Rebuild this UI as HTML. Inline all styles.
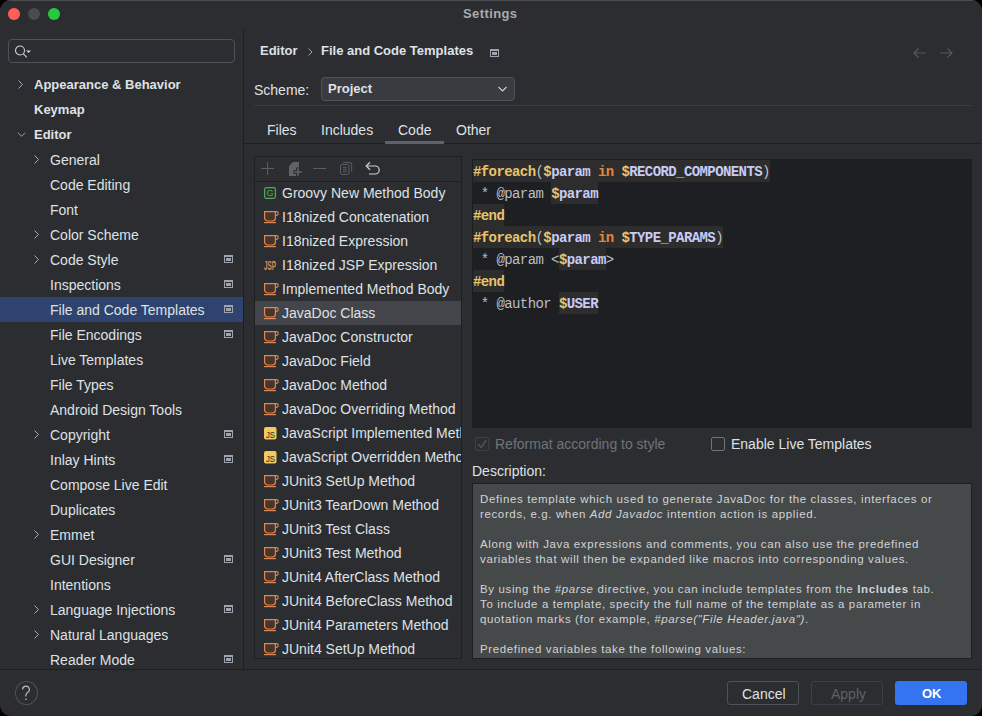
<!DOCTYPE html>
<html><head><meta charset="utf-8">
<style>
*{box-sizing:border-box;margin:0;padding:0}
html,body{width:982px;height:716px;overflow:hidden;background:#000}
body{font-family:"Liberation Sans",sans-serif;font-size:13px;color:#DFE1E5;position:relative}
.a{position:absolute}
.win{position:absolute;left:0;top:0;width:982px;height:716px;background:#2B2D30;border-radius:11px;overflow:hidden}
.t{position:absolute;white-space:pre;font-size:14px;margin-top:1px}
.t.b{font-weight:bold;font-size:13px;margin-top:0}
.row{position:absolute;left:0;width:243px;height:25px;line-height:25px;white-space:pre}
.row span{position:absolute;top:1px;font-size:14px}
.row b{position:absolute;top:0}
.chev{position:absolute;top:8px;width:9px;height:9px}
.pi{position:absolute;left:224px;top:8px;width:9px;height:8px}
.li{position:absolute;left:1px;width:206px;height:24px;line-height:24px;white-space:pre}
.li span{position:absolute;left:27px;top:0;font-size:14px}
.li svg{position:absolute;left:9px;top:6px}
.code{position:absolute;left:473px;font-family:"Liberation Mono",monospace;font-size:14px;letter-spacing:-.59px;height:22px;line-height:22px;white-space:pre;color:#BCBEC4;font-weight:bold}
.d,.v,.k,.g{position:relative;top:1px}.d{color:#E8C46A}.v{color:#C8CBF3}.k{color:#E3883A}.g{color:#BCBEC4;font-weight:normal}
.hl{background:#2D2D2E;display:inline-block;height:22px;vertical-align:top}
.desc{position:absolute;left:480px;font-size:11.5px;letter-spacing:.63px;color:#D2D3D5;white-space:pre;line-height:15px}
</style></head><body>
<div class="win">
  <div class="a" style="left:0;top:0;width:982px;height:1px;background:#4A4C50"></div>
  <!-- traffic lights -->
  <div class="a" style="left:8px;top:8px;width:12px;height:12px;border-radius:50%;background:#FF5F57"></div>
  <div class="a" style="left:28px;top:8px;width:12px;height:12px;border-radius:50%;background:#4A4B4E"></div>
  <div class="a" style="left:48px;top:8px;width:12px;height:12px;border-radius:50%;background:#28C840"></div>
  <div class="t b" style="left:463px;top:5px;line-height:17px;color:#A9AAAD;font-size:13px;letter-spacing:.4px">Settings</div>

  <!-- sidebar -->
  <div class="a" style="left:243px;top:28px;width:1px;height:641px;background:#1E1F22"></div>
  <div class="a" style="left:8px;top:39px;width:227px;height:24px;border:1px solid #4E5157;border-radius:4px;background:#2B2D30"></div>
  <svg class="a" style="left:14px;top:44px" width="20" height="16" viewBox="0 0 20 16">
    <circle cx="6" cy="6.5" r="4.5" fill="none" stroke="#CED0D6" stroke-width="1.1"/>
    <line x1="9.2" y1="9.7" x2="12.8" y2="13.3" stroke="#CED0D6" stroke-width="1.1"/>
    <path d="M12 6.5h5l-2.5 2.5z" fill="#CED0D6"/>
  </svg>

  <div class="a" style="left:0;top:72px;width:243px;height:597px;overflow:hidden" id="tree">
<div class="row" style="top:0px;"><svg class="chev" style="left:16px" width="9" height="9" viewBox="0 0 9 9"><path d="M2.5 0.5l4 4-4 4" fill="none" stroke="#A8ADBD" stroke-width="1"/></svg><b style="left:34px">Appearance &amp; Behavior</b></div>
<div class="row" style="top:25px;"><b style="left:34px">Keymap</b></div>
<div class="row" style="top:50px;"><svg class="chev" style="left:17px" width="10" height="9" viewBox="0 0 10 9"><path d="M1 2.5l4 4 4-4" fill="none" stroke="#A8ADBD" stroke-width="1"/></svg><b style="left:34px">Editor</b></div>
<div class="row" style="top:75px;"><svg class="chev" style="left:32px" width="9" height="9" viewBox="0 0 9 9"><path d="M2.5 0.5l4 4-4 4" fill="none" stroke="#A8ADBD" stroke-width="1"/></svg><span style="left:50px">General</span></div>
<div class="row" style="top:100px;"><span style="left:50px">Code Editing</span></div>
<div class="row" style="top:125px;"><span style="left:50px">Font</span></div>
<div class="row" style="top:150px;"><svg class="chev" style="left:32px" width="9" height="9" viewBox="0 0 9 9"><path d="M2.5 0.5l4 4-4 4" fill="none" stroke="#A8ADBD" stroke-width="1"/></svg><span style="left:50px">Color Scheme</span></div>
<div class="row" style="top:175px;"><svg class="chev" style="left:32px" width="9" height="9" viewBox="0 0 9 9"><path d="M2.5 0.5l4 4-4 4" fill="none" stroke="#A8ADBD" stroke-width="1"/></svg><span style="left:50px">Code Style</span><svg class="pi" width="9" height="8" viewBox="0 0 9 8"><rect x="0.5" y="0.5" width="8" height="7" fill="none" stroke="#9DA4AE"/><rect x="0" y="0" width="9" height="2" fill="#9DA4AE"/><rect x="2" y="3" width="5" height="3" fill="#9DA4AE"/></svg></div>
<div class="row" style="top:200px;"><span style="left:50px">Inspections</span><svg class="pi" width="9" height="8" viewBox="0 0 9 8"><rect x="0.5" y="0.5" width="8" height="7" fill="none" stroke="#9DA4AE"/><rect x="0" y="0" width="9" height="2" fill="#9DA4AE"/><rect x="2" y="3" width="5" height="3" fill="#9DA4AE"/></svg></div>
<div class="row" style="top:225px;background:#2E436E;"><span style="left:50px">File and Code Templates</span><svg class="pi" width="9" height="8" viewBox="0 0 9 8"><rect x="0.5" y="0.5" width="8" height="7" fill="none" stroke="#9DA4AE"/><rect x="0" y="0" width="9" height="2" fill="#9DA4AE"/><rect x="2" y="3" width="5" height="3" fill="#9DA4AE"/></svg></div>
<div class="row" style="top:250px;"><span style="left:50px">File Encodings</span><svg class="pi" width="9" height="8" viewBox="0 0 9 8"><rect x="0.5" y="0.5" width="8" height="7" fill="none" stroke="#9DA4AE"/><rect x="0" y="0" width="9" height="2" fill="#9DA4AE"/><rect x="2" y="3" width="5" height="3" fill="#9DA4AE"/></svg></div>
<div class="row" style="top:275px;"><span style="left:50px">Live Templates</span></div>
<div class="row" style="top:300px;"><span style="left:50px">File Types</span></div>
<div class="row" style="top:325px;"><span style="left:50px">Android Design Tools</span></div>
<div class="row" style="top:350px;"><svg class="chev" style="left:32px" width="9" height="9" viewBox="0 0 9 9"><path d="M2.5 0.5l4 4-4 4" fill="none" stroke="#A8ADBD" stroke-width="1"/></svg><span style="left:50px">Copyright</span><svg class="pi" width="9" height="8" viewBox="0 0 9 8"><rect x="0.5" y="0.5" width="8" height="7" fill="none" stroke="#9DA4AE"/><rect x="0" y="0" width="9" height="2" fill="#9DA4AE"/><rect x="2" y="3" width="5" height="3" fill="#9DA4AE"/></svg></div>
<div class="row" style="top:375px;"><span style="left:50px">Inlay Hints</span><svg class="pi" width="9" height="8" viewBox="0 0 9 8"><rect x="0.5" y="0.5" width="8" height="7" fill="none" stroke="#9DA4AE"/><rect x="0" y="0" width="9" height="2" fill="#9DA4AE"/><rect x="2" y="3" width="5" height="3" fill="#9DA4AE"/></svg></div>
<div class="row" style="top:400px;"><span style="left:50px">Compose Live Edit</span></div>
<div class="row" style="top:425px;"><span style="left:50px">Duplicates</span></div>
<div class="row" style="top:450px;"><svg class="chev" style="left:32px" width="9" height="9" viewBox="0 0 9 9"><path d="M2.5 0.5l4 4-4 4" fill="none" stroke="#A8ADBD" stroke-width="1"/></svg><span style="left:50px">Emmet</span></div>
<div class="row" style="top:475px;"><span style="left:50px">GUI Designer</span><svg class="pi" width="9" height="8" viewBox="0 0 9 8"><rect x="0.5" y="0.5" width="8" height="7" fill="none" stroke="#9DA4AE"/><rect x="0" y="0" width="9" height="2" fill="#9DA4AE"/><rect x="2" y="3" width="5" height="3" fill="#9DA4AE"/></svg></div>
<div class="row" style="top:500px;"><span style="left:50px">Intentions</span></div>
<div class="row" style="top:525px;"><svg class="chev" style="left:32px" width="9" height="9" viewBox="0 0 9 9"><path d="M2.5 0.5l4 4-4 4" fill="none" stroke="#A8ADBD" stroke-width="1"/></svg><span style="left:50px">Language Injections</span><svg class="pi" width="9" height="8" viewBox="0 0 9 8"><rect x="0.5" y="0.5" width="8" height="7" fill="none" stroke="#9DA4AE"/><rect x="0" y="0" width="9" height="2" fill="#9DA4AE"/><rect x="2" y="3" width="5" height="3" fill="#9DA4AE"/></svg></div>
<div class="row" style="top:550px;"><svg class="chev" style="left:32px" width="9" height="9" viewBox="0 0 9 9"><path d="M2.5 0.5l4 4-4 4" fill="none" stroke="#A8ADBD" stroke-width="1"/></svg><span style="left:50px">Natural Languages</span></div>
<div class="row" style="top:575px;"><span style="left:50px">Reader Mode</span><svg class="pi" width="9" height="8" viewBox="0 0 9 8"><rect x="0.5" y="0.5" width="8" height="7" fill="none" stroke="#9DA4AE"/><rect x="0" y="0" width="9" height="2" fill="#9DA4AE"/><rect x="2" y="3" width="5" height="3" fill="#9DA4AE"/></svg></div>
  </div>

  <!-- bottom bar -->
  <div class="a" style="left:0;top:669px;width:982px;height:1px;background:#1E1F22"></div>
  <div class="a" style="left:15px;top:681px;width:23px;height:24px;border:1px solid #4E5157;border-radius:50%"></div>
  <svg class="a" style="left:19px;top:684px" width="14" height="18" viewBox="0 0 14 18"><path d="M3.6 5.6A3.4 3.4 0 1 1 8.4 8.6C7.3 9.3 6.9 9.9 6.9 11.2V12.4" fill="none" stroke="#C3C6CC" stroke-width="1.1"/><circle cx="6.9" cy="15.2" r="0.8" fill="#C3C6CC"/></svg>
  <div class="a" style="left:727px;top:681px;width:72px;height:24px;border:1px solid #4E5157;border-radius:3px"></div>
  <div class="t" style="left:742px;top:681px;line-height:24px;color:#DFE1E5">Cancel</div>
  <div class="a" style="left:811px;top:681px;width:72px;height:24px;border:1px solid #3E4045;border-radius:3px"></div>
  <div class="t" style="left:831px;top:681px;line-height:24px;color:#5E6167">Apply</div>
  <div class="a" style="left:895px;top:681px;width:72px;height:24px;background:#3574F0;border-radius:3px"></div>
  <div class="t b" style="left:922px;top:682px;line-height:24px;color:#FFFFFF">OK</div>

  <!-- right header -->
  <div class="t b" style="left:260px;top:42px;line-height:18px">Editor</div>
  <svg class="a" style="left:306px;top:47px" width="8" height="10"><path d="M2.5 1.5l3.5 3.5-3.5 3.5" fill="none" stroke="#9DA0A8" stroke-width="1"/></svg>
  <div class="t b" style="left:321px;top:42px;line-height:18px">File and Code Templates</div>
  <svg class="a" style="left:490px;top:49px" width="9" height="8"><rect x="0.5" y="0.5" width="8" height="7" fill="none" stroke="#9DA4AE"/><rect x="0" y="0" width="9" height="2" fill="#9DA4AE"/><rect x="2" y="3" width="5" height="3" fill="#9DA4AE"/></svg>
  <svg class="a" style="left:912px;top:47px" width="16" height="12"><path d="M14 6H2M6.5 1.5L2 6l4.5 4.5" fill="none" stroke="#56585C" stroke-width="1.2"/></svg>
  <svg class="a" style="left:938px;top:47px" width="16" height="12"><path d="M2 6h12M9.5 1.5L14 6l-4.5 4.5" fill="none" stroke="#56585C" stroke-width="1.2"/></svg>

  <div class="t" style="left:254px;top:80px;line-height:18px">Scheme:</div>
  <div class="a" style="left:321px;top:77px;width:194px;height:24px;border:1px solid #4E5157;border-radius:4px;background:#393B40"></div>
  <div class="t b" style="left:328px;top:80px;line-height:18px">Project</div>
  <svg class="a" style="left:497px;top:85px" width="11" height="8"><path d="M1.5 2l4 4 4-4" fill="none" stroke="#CED0D6" stroke-width="1.1"/></svg>
  <div class="a" style="left:254px;top:105px;width:718px;height:1px;background:#393B40"></div>

  <!-- tabs -->
  <div class="t" style="left:267px;top:120px;line-height:18px">Files</div>
  <div class="t" style="left:321px;top:120px;line-height:18px">Includes</div>
  <div class="t" style="left:398px;top:120px;line-height:18px">Code</div>
  <div class="t" style="left:456px;top:120px;line-height:18px">Other</div>
  <div class="a" style="left:244px;top:143px;width:738px;height:1px;background:#1E1F22"></div>
  <div class="a" style="left:385px;top:141px;width:59px;height:3px;background:#5C616B"></div>

  <!-- template list -->
  <div class="a" style="left:254px;top:156px;width:208px;height:503px;border:1px solid #1E1F22;overflow:hidden" id="list">
<svg class="a" style="left:0;top:0;z-index:3" width="206" height="24" viewBox="0 0 206 24">
<path d="M12.5 5v13M6 11.5h13" stroke="#5A5D63" stroke-width="1"/>
<path d="M34 9L38 5H44V19H34Z" fill="#606266"/>
<path d="M43 10.5v9M38.5 15h9" stroke="#2B2D30" stroke-width="4"/>
<path d="M43 11.2v7.6M39.2 15h7.6" stroke="#606266" stroke-width="1.7"/>
<path d="M58 11.5h13" stroke="#5A5D63" stroke-width="1"/>
<path d="M88 5.5H95.2A1.5 1.5 0 0 1 96.7 7V14.7" fill="none" stroke="#5A5D63" stroke-width="1"/>
<rect x="85.5" y="7.5" width="8.5" height="10" rx="1.5" fill="none" stroke="#5A5D63" stroke-width="1"/>
<path d="M87.8 10.7h4M87.8 12.7h4M87.8 14.7h4" stroke="#5A5D63" stroke-width="1"/>
<path d="M115 5.3L111.2 9L115 12.7" fill="none" stroke="#CED0D6" stroke-width="1.2"/>
<path d="M111.5 9H120.2A4 4 0 0 1 120.2 17H114" fill="none" stroke="#CED0D6" stroke-width="1.2"/>
</svg>
<div class="a" style="left:0;top:24px;width:206px;height:1px;background:#1E1F22;z-index:2"></div>
<div class="li" style="left:0;top:24px;"><svg width="13" height="13" viewBox="0 0 13 13"><rect x="0.6" y="0.6" width="10.8" height="10.8" rx="1.8" fill="#253627" stroke="#55A760" stroke-width="1.2"/><text x="6" y="9.3" text-anchor="middle" font-family="Liberation Sans" font-size="9" fill="#55A760">G</text></svg><span>Groovy New Method Body</span></div>
<div class="li" style="left:0;top:48px;"><svg width="16" height="14" viewBox="0 0 16 14"><path d="M0.6 0.6H11.4V7A3 3 0 0 1 8.4 10H3.6A3 3 0 0 1 0.6 7Z" fill="#4A3328" stroke="#E08855" stroke-width="1.2"/><path d="M11.4 0.6H12.4A1.9 1.9 0 0 1 12.4 4.4H11.4" fill="none" stroke="#E08855" stroke-width="1.1"/><rect x="0" y="11" width="12" height="1.2" fill="#E08855"/></svg><span>I18nized Concatenation</span></div>
<div class="li" style="left:0;top:72px;"><svg width="16" height="14" viewBox="0 0 16 14"><path d="M0.6 0.6H11.4V7A3 3 0 0 1 8.4 10H3.6A3 3 0 0 1 0.6 7Z" fill="#4A3328" stroke="#E08855" stroke-width="1.2"/><path d="M11.4 0.6H12.4A1.9 1.9 0 0 1 12.4 4.4H11.4" fill="none" stroke="#E08855" stroke-width="1.1"/><rect x="0" y="11" width="12" height="1.2" fill="#E08855"/></svg><span>I18nized Expression</span></div>
<div class="li" style="left:0;top:96px;"><svg width="14" height="13" viewBox="0 0 14 13"><text x="0" y="11" font-family="Liberation Sans" font-weight="bold" font-size="12.5" fill="#E08855" textLength="12" lengthAdjust="spacingAndGlyphs">JSP</text></svg><span>I18nized JSP Expression</span></div>
<div class="li" style="left:0;top:120px;"><svg width="16" height="14" viewBox="0 0 16 14"><path d="M0.6 0.6H11.4V7A3 3 0 0 1 8.4 10H3.6A3 3 0 0 1 0.6 7Z" fill="#4A3328" stroke="#E08855" stroke-width="1.2"/><path d="M11.4 0.6H12.4A1.9 1.9 0 0 1 12.4 4.4H11.4" fill="none" stroke="#E08855" stroke-width="1.1"/><rect x="0" y="11" width="12" height="1.2" fill="#E08855"/></svg><span>Implemented Method Body</span></div>
<div class="li" style="left:0;top:144px;background:#43454A;"><svg width="16" height="14" viewBox="0 0 16 14"><path d="M0.6 0.6H11.4V7A3 3 0 0 1 8.4 10H3.6A3 3 0 0 1 0.6 7Z" fill="#4A3328" stroke="#E08855" stroke-width="1.2"/><path d="M11.4 0.6H12.4A1.9 1.9 0 0 1 12.4 4.4H11.4" fill="none" stroke="#E08855" stroke-width="1.1"/><rect x="0" y="11" width="12" height="1.2" fill="#E08855"/></svg><span>JavaDoc Class</span></div>
<div class="li" style="left:0;top:168px;"><svg width="16" height="14" viewBox="0 0 16 14"><path d="M0.6 0.6H11.4V7A3 3 0 0 1 8.4 10H3.6A3 3 0 0 1 0.6 7Z" fill="#4A3328" stroke="#E08855" stroke-width="1.2"/><path d="M11.4 0.6H12.4A1.9 1.9 0 0 1 12.4 4.4H11.4" fill="none" stroke="#E08855" stroke-width="1.1"/><rect x="0" y="11" width="12" height="1.2" fill="#E08855"/></svg><span>JavaDoc Constructor</span></div>
<div class="li" style="left:0;top:192px;"><svg width="16" height="14" viewBox="0 0 16 14"><path d="M0.6 0.6H11.4V7A3 3 0 0 1 8.4 10H3.6A3 3 0 0 1 0.6 7Z" fill="#4A3328" stroke="#E08855" stroke-width="1.2"/><path d="M11.4 0.6H12.4A1.9 1.9 0 0 1 12.4 4.4H11.4" fill="none" stroke="#E08855" stroke-width="1.1"/><rect x="0" y="11" width="12" height="1.2" fill="#E08855"/></svg><span>JavaDoc Field</span></div>
<div class="li" style="left:0;top:216px;"><svg width="16" height="14" viewBox="0 0 16 14"><path d="M0.6 0.6H11.4V7A3 3 0 0 1 8.4 10H3.6A3 3 0 0 1 0.6 7Z" fill="#4A3328" stroke="#E08855" stroke-width="1.2"/><path d="M11.4 0.6H12.4A1.9 1.9 0 0 1 12.4 4.4H11.4" fill="none" stroke="#E08855" stroke-width="1.1"/><rect x="0" y="11" width="12" height="1.2" fill="#E08855"/></svg><span>JavaDoc Method</span></div>
<div class="li" style="left:0;top:240px;"><svg width="16" height="14" viewBox="0 0 16 14"><path d="M0.6 0.6H11.4V7A3 3 0 0 1 8.4 10H3.6A3 3 0 0 1 0.6 7Z" fill="#4A3328" stroke="#E08855" stroke-width="1.2"/><path d="M11.4 0.6H12.4A1.9 1.9 0 0 1 12.4 4.4H11.4" fill="none" stroke="#E08855" stroke-width="1.1"/><rect x="0" y="11" width="12" height="1.2" fill="#E08855"/></svg><span>JavaDoc Overriding Method</span></div>
<div class="li" style="left:0;top:264px;"><svg width="13" height="13" viewBox="0 0 13 13"><rect x="0" y="0" width="12.5" height="12.5" rx="2" fill="#F4C95D"/><text x="2" y="10.8" font-family="Liberation Sans" font-size="9.5" fill="#1E1F22" textLength="9" lengthAdjust="spacingAndGlyphs">JS</text></svg><span>JavaScript Implemented Method</span></div>
<div class="li" style="left:0;top:288px;"><svg width="13" height="13" viewBox="0 0 13 13"><rect x="0" y="0" width="12.5" height="12.5" rx="2" fill="#F4C95D"/><text x="2" y="10.8" font-family="Liberation Sans" font-size="9.5" fill="#1E1F22" textLength="9" lengthAdjust="spacingAndGlyphs">JS</text></svg><span>JavaScript Overridden Method</span></div>
<div class="li" style="left:0;top:312px;"><svg width="16" height="14" viewBox="0 0 16 14"><path d="M0.6 0.6H11.4V7A3 3 0 0 1 8.4 10H3.6A3 3 0 0 1 0.6 7Z" fill="#4A3328" stroke="#E08855" stroke-width="1.2"/><path d="M11.4 0.6H12.4A1.9 1.9 0 0 1 12.4 4.4H11.4" fill="none" stroke="#E08855" stroke-width="1.1"/><rect x="0" y="11" width="12" height="1.2" fill="#E08855"/></svg><span>JUnit3 SetUp Method</span></div>
<div class="li" style="left:0;top:336px;"><svg width="16" height="14" viewBox="0 0 16 14"><path d="M0.6 0.6H11.4V7A3 3 0 0 1 8.4 10H3.6A3 3 0 0 1 0.6 7Z" fill="#4A3328" stroke="#E08855" stroke-width="1.2"/><path d="M11.4 0.6H12.4A1.9 1.9 0 0 1 12.4 4.4H11.4" fill="none" stroke="#E08855" stroke-width="1.1"/><rect x="0" y="11" width="12" height="1.2" fill="#E08855"/></svg><span>JUnit3 TearDown Method</span></div>
<div class="li" style="left:0;top:360px;"><svg width="16" height="14" viewBox="0 0 16 14"><path d="M0.6 0.6H11.4V7A3 3 0 0 1 8.4 10H3.6A3 3 0 0 1 0.6 7Z" fill="#4A3328" stroke="#E08855" stroke-width="1.2"/><path d="M11.4 0.6H12.4A1.9 1.9 0 0 1 12.4 4.4H11.4" fill="none" stroke="#E08855" stroke-width="1.1"/><rect x="0" y="11" width="12" height="1.2" fill="#E08855"/></svg><span>JUnit3 Test Class</span></div>
<div class="li" style="left:0;top:384px;"><svg width="16" height="14" viewBox="0 0 16 14"><path d="M0.6 0.6H11.4V7A3 3 0 0 1 8.4 10H3.6A3 3 0 0 1 0.6 7Z" fill="#4A3328" stroke="#E08855" stroke-width="1.2"/><path d="M11.4 0.6H12.4A1.9 1.9 0 0 1 12.4 4.4H11.4" fill="none" stroke="#E08855" stroke-width="1.1"/><rect x="0" y="11" width="12" height="1.2" fill="#E08855"/></svg><span>JUnit3 Test Method</span></div>
<div class="li" style="left:0;top:408px;"><svg width="16" height="14" viewBox="0 0 16 14"><path d="M0.6 0.6H11.4V7A3 3 0 0 1 8.4 10H3.6A3 3 0 0 1 0.6 7Z" fill="#4A3328" stroke="#E08855" stroke-width="1.2"/><path d="M11.4 0.6H12.4A1.9 1.9 0 0 1 12.4 4.4H11.4" fill="none" stroke="#E08855" stroke-width="1.1"/><rect x="0" y="11" width="12" height="1.2" fill="#E08855"/></svg><span>JUnit4 AfterClass Method</span></div>
<div class="li" style="left:0;top:432px;"><svg width="16" height="14" viewBox="0 0 16 14"><path d="M0.6 0.6H11.4V7A3 3 0 0 1 8.4 10H3.6A3 3 0 0 1 0.6 7Z" fill="#4A3328" stroke="#E08855" stroke-width="1.2"/><path d="M11.4 0.6H12.4A1.9 1.9 0 0 1 12.4 4.4H11.4" fill="none" stroke="#E08855" stroke-width="1.1"/><rect x="0" y="11" width="12" height="1.2" fill="#E08855"/></svg><span>JUnit4 BeforeClass Method</span></div>
<div class="li" style="left:0;top:456px;"><svg width="16" height="14" viewBox="0 0 16 14"><path d="M0.6 0.6H11.4V7A3 3 0 0 1 8.4 10H3.6A3 3 0 0 1 0.6 7Z" fill="#4A3328" stroke="#E08855" stroke-width="1.2"/><path d="M11.4 0.6H12.4A1.9 1.9 0 0 1 12.4 4.4H11.4" fill="none" stroke="#E08855" stroke-width="1.1"/><rect x="0" y="11" width="12" height="1.2" fill="#E08855"/></svg><span>JUnit4 Parameters Method</span></div>
<div class="li" style="left:0;top:480px;"><svg width="16" height="14" viewBox="0 0 16 14"><path d="M0.6 0.6H11.4V7A3 3 0 0 1 8.4 10H3.6A3 3 0 0 1 0.6 7Z" fill="#4A3328" stroke="#E08855" stroke-width="1.2"/><path d="M11.4 0.6H12.4A1.9 1.9 0 0 1 12.4 4.4H11.4" fill="none" stroke="#E08855" stroke-width="1.1"/><rect x="0" y="11" width="12" height="1.2" fill="#E08855"/></svg><span>JUnit4 SetUp Method</span></div>
  </div>

  <!-- editor -->
  <div class="a" style="left:472px;top:159px;width:500px;height:269px;background:#1E1F22;border:1px solid #1C1D20"></div>
  <div id="code"><div class="code" style="top:160px"><span class="hl"><span class="d">#foreach</span><span class="g">(</span><span class="d">$</span><span class="v">param</span><span class="g"> </span><span class="k">in</span><span class="g"> </span><span class="d">$</span><span class="v">RECORD_COMPONENTS</span><span class="g">)</span></span></div>
<div class="code" style="top:182px"><span class="g"> * @param </span><span class="hl"><span class="d">$</span><span class="v">param</span></span></div>
<div class="code" style="top:204px"><span class="hl"><span class="d">#end</span></span></div>
<div class="code" style="top:226px"><span class="hl"><span class="d">#foreach</span><span class="g">(</span><span class="d">$</span><span class="v">param</span><span class="g"> </span><span class="k">in</span><span class="g"> </span><span class="d">$</span><span class="v">TYPE_PARAMS</span><span class="g">)</span></span></div>
<div class="code" style="top:248px"><span class="g"> * @param &lt;</span><span class="hl"><span class="d">$</span><span class="v">param</span></span><span class="g">&gt;</span></div>
<div class="code" style="top:270px"><span class="hl"><span class="d">#end</span></span></div>
<div class="code" style="top:292px"><span class="g"> * @author </span><span class="hl"><span class="d">$</span><span class="v">USER</span></span></div></div>

  <!-- checkboxes -->
  <div class="a" style="left:475px;top:437px;width:14px;height:14px;border:1px solid #3E4045;border-radius:2px"></div>
  <svg class="a" style="left:475px;top:437px" width="14" height="14"><path d="M3 7.3L6.4 10.5L11 3.2" fill="none" stroke="#55585E" stroke-width="1.4"/></svg>
  <div class="t" style="left:495px;top:434px;line-height:18px;color:#6F737A">Reformat according to style</div>
  <div class="a" style="left:711px;top:437px;width:14px;height:14px;border:1px solid #6F737A;border-radius:2px"></div>
  <div class="t" style="left:731px;top:434px;line-height:18px">Enable Live Templates</div>
  <div class="t" style="left:472px;top:461px;line-height:18px">Description:</div>

  <!-- description -->
  <div class="a" style="left:472px;top:483px;width:500px;height:176px;background:#45494A;border:1px solid #1E1F22"></div>
  <div id="desc"><div class="a" style="left:473px;top:484px;width:498px;height:174px;overflow:hidden"><div class="desc" style="left:7px;top:8px">Defines template which used to generate JavaDoc for the classes, interfaces or</div>
<div class="desc" style="left:7px;top:23px">records, e.g. when <i>Add Javadoc</i> intention action is applied.</div>
<div class="desc" style="left:7px;top:53px">Along with Java expressions and comments, you can also use the predefined</div>
<div class="desc" style="left:7px;top:68px">variables that will then be expanded like macros into corresponding values.</div>
<div class="desc" style="left:7px;top:98px">By using the <i>#parse</i> directive, you can include templates from the <b>Includes</b> tab.</div>
<div class="desc" style="left:7px;top:113px">To include a template, specify the full name of the template as a parameter in</div>
<div class="desc" style="left:7px;top:128px">quotation marks (for example, <i>#parse("File Header.java")</i>.</div>
<div class="desc" style="left:7px;top:158px">Predefined variables take the following values:</div></div></div>
</div>
</body></html>
